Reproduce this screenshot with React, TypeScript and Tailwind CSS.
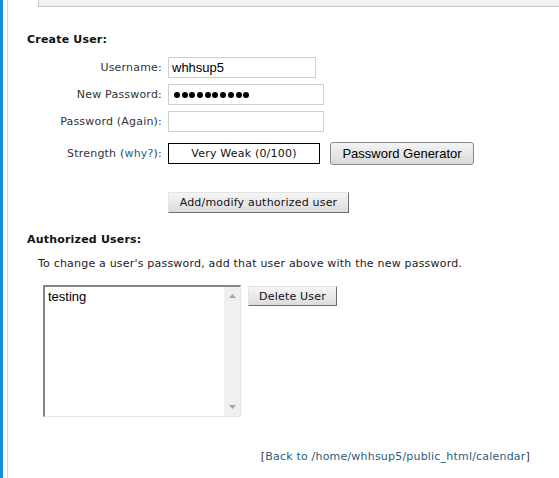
import React from "react";

const btnFlat =
  "flex items-center justify-center border border-t-[#e4e4e4] border-l-[#e4e4e4] border-r-[#6f6f6f] border-b-[#6f6f6f] bg-gradient-to-b from-[#f6f6f6] to-[#dcdcdc] text-[11px] tracking-[0.2px] text-[#111]";

function Row({ label, children }: { label: React.ReactNode; children: React.ReactNode }) {
  return (
    <div className="flex items-center">
      <div className="w-[141px] pr-[6px] text-right">{label}</div>
      {children}
    </div>
  );
}

export default function App() {
  return (
    <div className="flex min-h-screen overflow-hidden bg-white font-['DejaVu_Sans',sans-serif] text-[11px] leading-[13px] tracking-[0.2px] text-[#333]">
      <div className="w-[3px] shrink-0 bg-[#1c8bcb]" />
      <div className="w-[4px] shrink-0" />
      <div className="w-px shrink-0 bg-[#d6dcdf]" />

      <div className="flex-1 min-w-0">
        <div className="ml-[30px] h-[7px] border-b border-l border-[#c2c9c9] bg-[#f2f2f2]" />

        <section className="pl-[19px]">
          <h2 className="mt-[26px] font-bold text-[#111]">Create User:</h2>

          <div className="mt-[11px] flex flex-col gap-[6px]">
            <Row label="Username:">
              <input
                readOnly
                value="whhsup5"
                className="h-[21px] w-[148px] border border-[#cfcfcf] px-[3px] font-['Liberation_Sans',sans-serif] text-[13px] tracking-normal text-black outline-none"
              />
            </Row>
            <Row label="New Password:">
              <div className="flex h-[21px] w-[156px] items-center gap-[1.7px] border border-[#cfcfcf] pl-[5px]">
                {Array.from({ length: 10 }).map((_, i) => (
                  <span key={i} className="h-[6px] w-[6px] rounded-full bg-black" />
                ))}
              </div>
            </Row>
            <Row label="Password (Again):">
              <input
                readOnly
                value=""
                className="h-[21px] w-[156px] border border-[#cfcfcf] px-[3px] font-['Liberation_Sans',sans-serif] text-[13px] outline-none"
              />
            </Row>
          </div>

          <div className="mt-[10px]">
            <Row
              label={
                <>
                  Strength (<a className="text-[#1f5d8c]">why?</a>):
                </>
              }
            >
              <div className="flex h-[21px] w-[152px] items-center justify-center border border-black text-[#111]">
                Very Weak (0/100)
              </div>
              <button className="ml-[10px] h-[23px] w-[144px] rounded-[3px] border border-[#8a8a8a] bg-gradient-to-b from-[#f4f4f4] to-[#d9d9d9] font-['Liberation_Sans',sans-serif] text-[13px] tracking-normal text-black">
                Password Generator
              </button>
            </Row>
          </div>

          <button className={`${btnFlat} ml-[141px] mt-[27px] h-[21px] w-[181px]`}>
            Add/modify authorized user
          </button>

          <h2 className="mt-[20px] font-bold text-[#111]">Authorized Users:</h2>
          <p className="mt-[11px] ml-[11px] text-[#222]">
            To change a user's password, add that user above with the new password.
          </p>

          <div className="mt-[15px] ml-[16px] flex items-start gap-[7px]">
            <div className="flex h-[132px] w-[198px] border-l-2 border-t-2 border-b border-r border-l-[#858585] border-t-[#858585] border-b-[#e6e6e6] border-r-[#e6e6e6] bg-white">
              <div className="flex-1 pl-[3px] pt-[2px] font-['Liberation_Sans',sans-serif] text-[13px] leading-[16px] tracking-normal text-black">
                testing
              </div>
              <div className="flex w-[16px] flex-col items-center justify-between bg-[#f0f0f0] py-[7px]">
                <svg width="7" height="4" viewBox="0 0 7 4">
                  <path d="M0 4 L3.5 0 L7 4 Z" fill="#a8a8a8" />
                </svg>
                <svg width="7" height="4" viewBox="0 0 7 4">
                  <path d="M0 0 L3.5 4 L7 0 Z" fill="#a8a8a8" />
                </svg>
              </div>
            </div>
            <button className={`${btnFlat} mt-px h-[20px] w-[89px]`}>Delete User</button>
          </div>
        </section>

        <div className="mt-[33px] flex justify-end pr-[29px] text-[#333]">
          <span>
            [<a className="text-[#2b5b7b]">Back to /home/whhsup5/public_html/calendar</a>]
          </span>
        </div>
      </div>
    </div>
  );
}
